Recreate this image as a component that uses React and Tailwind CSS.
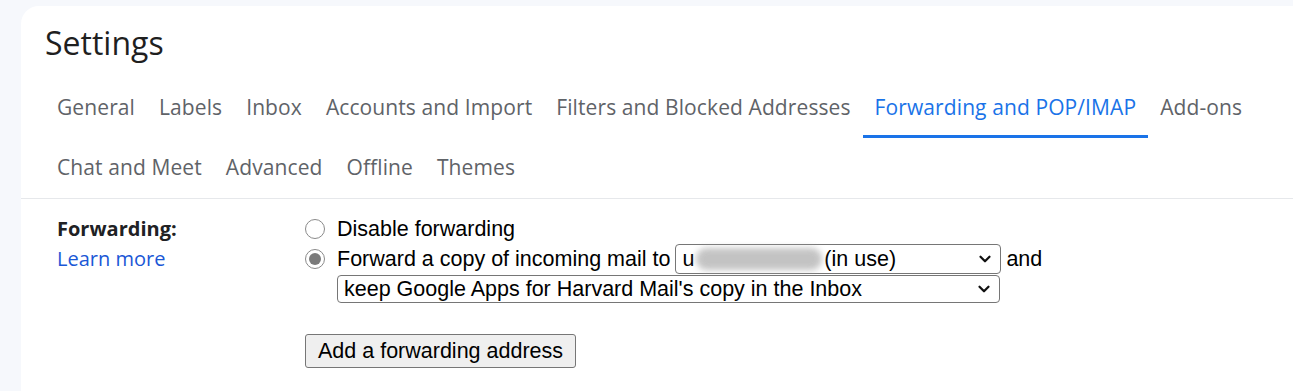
import { ChevronDown } from 'lucide-react';

const tabRows = [
  ['General', 'Labels', 'Inbox', 'Accounts and Import', 'Filters and Blocked Addresses', 'Forwarding and POP/IMAP', 'Add-ons'],
  ['Chat and Meet', 'Advanced', 'Offline', 'Themes'],
];

const active = 'Forwarding and POP/IMAP';

function Radio({ checked }) {
  return (
    <span className="flex h-[20px] w-[20px] shrink-0 items-center justify-center rounded-full border-[1.5px] border-[#8a8a8a] bg-white">
      {checked && <span className="h-[12px] w-[12px] rounded-full bg-[#7a7a7a]" />}
    </span>
  );
}

function SelectBox({ className, children }) {
  return (
    <div className={`flex items-center rounded-[4px] border border-[#767676] bg-white pl-[6px] pr-[6px] ${className}`}>
      <div className="flex min-w-0 flex-1 items-center whitespace-nowrap">{children}</div>
      <ChevronDown size={18} strokeWidth={3} className="shrink-0 text-[#111]" />
    </div>
  );
}

export default function App() {
  return (
    <div className="h-[391px] overflow-hidden bg-[#f6f8fc] pl-[21px] pt-[6px] font-['Open_Sans',sans-serif]">
      <div className="h-[420px] rounded-tl-[18px] bg-white">
        <div className="px-[24px] pt-[18px] pb-[16px]">
          <h1 className="text-[32px] leading-[38px] text-[#1f1f1f]">Settings</h1>
        </div>

        <div className="border-b border-[#e6e8eb] px-[24px]">
          {tabRows.map((row, i) => (
            <div key={i} className="flex h-[60px]">
              {row.map((tab) => (
                <div
                  key={tab}
                  className={`relative flex items-center px-[12px] text-[21px] tracking-[0.1px] ${tab === active ? 'text-[#1a73e8]' : 'text-[#5f6368]'}`}
                >
                  {tab}
                  {tab === active && <span className="absolute bottom-0 left-0 right-0 h-[3px] bg-[#1a73e8]" />}
                </div>
              ))}
            </div>
          ))}
        </div>

        <div className="flex px-[36px] pt-[15px]">
          <div className="w-[248px] shrink-0">
            <div className="text-[20px] font-bold leading-[30px] text-[#202124]">Forwarding:</div>
            <div className="text-[20px] leading-[30px] text-[#1a57d6]">Learn more</div>
          </div>
          <div className="font-['Liberation_Sans',sans-serif] text-[21.5px] text-black">
            <div className="flex h-[30px] items-center gap-[12px]">
              <Radio />
              <span>Disable forwarding</span>
            </div>
            <div className="flex h-[30px] items-center gap-[12px]">
              <Radio checked />
              <span className="flex items-center gap-[5px]">
                Forward a copy of incoming mail to
                <SelectBox className="h-[30px] w-[326px]">
                  <span>u</span>
                  <span className="mx-[2px] h-[22px] w-[126px] rounded-full bg-[#b5b5b5] opacity-80 blur-[3px]" />
                  <span>(in use)</span>
                </SelectBox>
                and
              </span>
            </div>
            <div className="flex pl-[32px] pt-[1px]">
              <SelectBox className="h-[28px] w-[663px]">
                <span>keep Google Apps for Harvard Mail's copy in the Inbox</span>
              </SelectBox>
            </div>
            <div className="pt-[31px]">
              <button className="h-[34px] rounded-[3px] border border-[#767676] bg-[#efefef] px-[12px] text-[21.5px] text-black">
                Add a forwarding address
              </button>
            </div>
          </div>
        </div>
      </div>
    </div>
  );
}
